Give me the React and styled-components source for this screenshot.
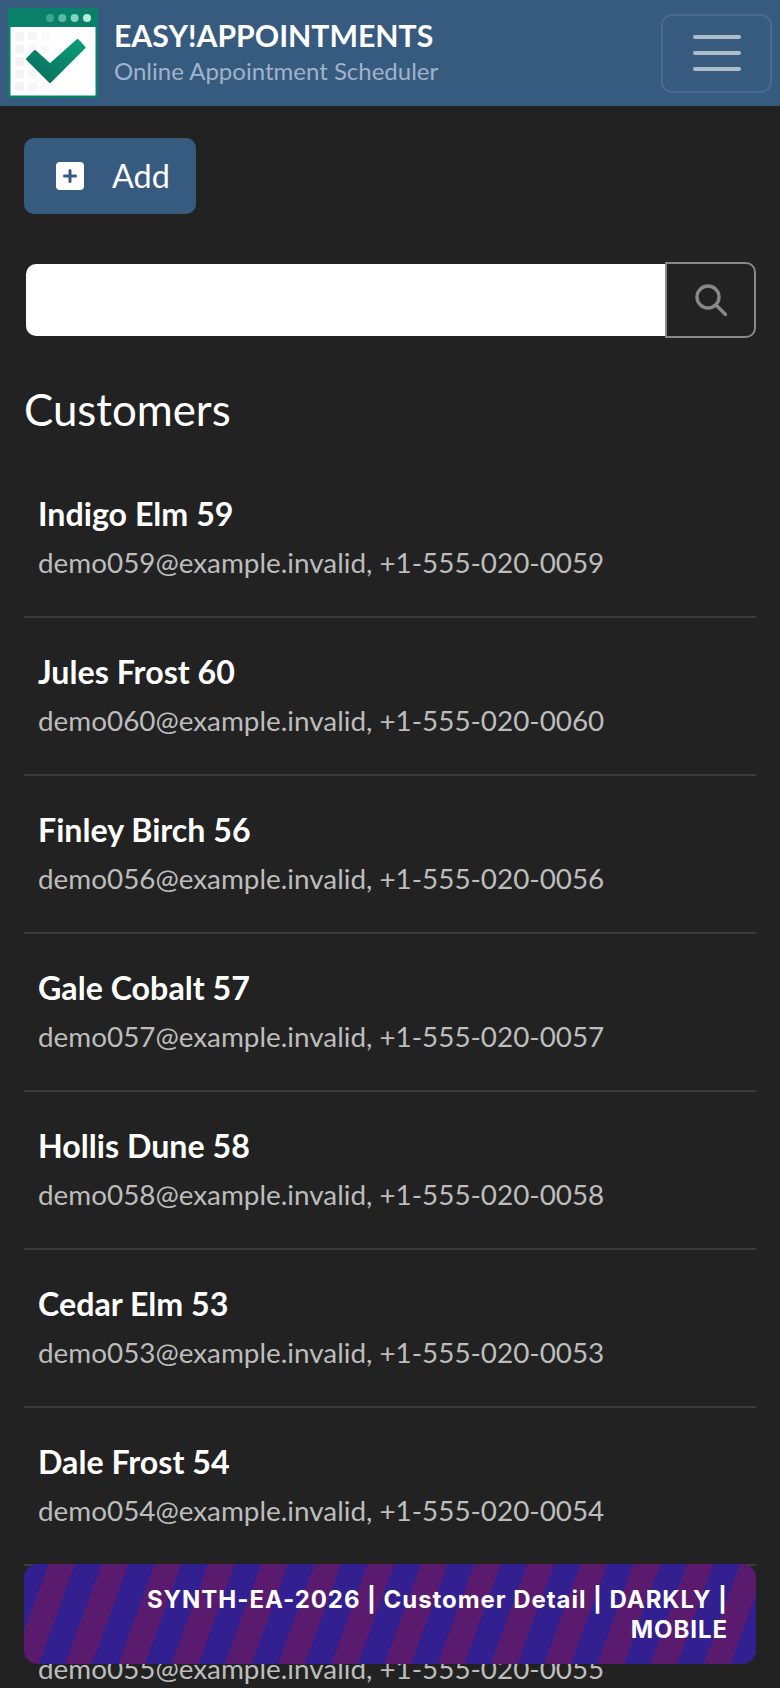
import React from "react";
import styled, { createGlobalStyle } from "styled-components";

const customers = [
  { name: "Indigo Elm 59", email: "demo059@example.invalid", phone: "+1-555-020-0059" },
  { name: "Jules Frost 60", email: "demo060@example.invalid", phone: "+1-555-020-0060" },
  { name: "Finley Birch 56", email: "demo056@example.invalid", phone: "+1-555-020-0056" },
  { name: "Gale Cobalt 57", email: "demo057@example.invalid", phone: "+1-555-020-0057" },
  { name: "Hollis Dune 58", email: "demo058@example.invalid", phone: "+1-555-020-0058" },
  { name: "Cedar Elm 53", email: "demo053@example.invalid", phone: "+1-555-020-0053" },
  { name: "Dale Frost 54", email: "demo054@example.invalid", phone: "+1-555-020-0054" },
  { name: "Ellis Birch 55", email: "demo055@example.invalid", phone: "+1-555-020-0055" },
];

const Logo = () => (
  <LogoSvg viewBox="0 0 90 90">
    <defs>
      <linearGradient id="logoGreen" x1="0" y1="1" x2="1" y2="0">
        <stop offset="0" stopColor="#0b6b5c" />
        <stop offset="1" stopColor="#0a9e76" />
      </linearGradient>
    </defs>
    <rect x="0" y="0" width="90" height="90" rx="2" fill="#08806a" />
    <rect x="2.5" y="19" width="85" height="68.5" fill="#ffffff" />
    {[0, 1, 2, 3, 4].map((r) =>
      [0, 1, 2, 3].map((c) => (
        <rect key={`${r}-${c}`} x={7 + c * 13} y={24 + r * 12.5} width="9" height="9" rx="2" fill="#f3f3f5" opacity={1 - c * 0.3} />
      ))
    )}
    <circle cx="42" cy="10" r="4" fill="#3fa78f" />
    <circle cx="54.3" cy="10" r="4" fill="#5dbba3" />
    <circle cx="66.6" cy="10" r="4" fill="#86d4bd" />
    <circle cx="79" cy="10" r="4" fill="#b5efd9" />
    <path
      d="M19.5 51 L27 43.5 L42 57 L69.5 32.5 L76 39.5 L42 73.5 Z"
      fill="url(#logoGreen)"
      stroke="url(#logoGreen)"
      strokeWidth="3"
      strokeLinejoin="round"
    />
  </LogoSvg>
);

export default function App() {
  return (
    <Page>
      <GlobalStyle />
      <Header>
        <Brand>
          <Logo />
          <BrandText>
            <BrandTitle>EASY!APPOINTMENTS</BrandTitle>
            <BrandSub>Online Appointment Scheduler</BrandSub>
          </BrandText>
        </Brand>
        <Toggler aria-label="Menu">
          <TogglerBar />
          <TogglerBar />
          <TogglerBar />
        </Toggler>
      </Header>

      <Main>
        <AddButton>
          <AddIcon viewBox="0 0 28 28">
            <rect width="28" height="28" rx="4" fill="#fff" />
            <path d="M14 8.5v11M8.5 14h11" stroke="#375a7f" strokeWidth="3" strokeLinecap="round" />
          </AddIcon>
          <AddLabel>Add</AddLabel>
        </AddButton>

        <SearchGroup>
          <SearchInput />
          <SearchButton aria-label="Search">
            <svg width="32" height="32" viewBox="0 0 32 32" fill="none" stroke="#888" strokeWidth="3.4" strokeLinecap="round">
              <circle cx="13" cy="13" r="11" />
              <path d="M21.5 21.5l9 9" />
            </svg>
          </SearchButton>
        </SearchGroup>

        <Heading>Customers</Heading>

        <List>
          {customers.map((c) => (
            <Row key={c.email}>
              <Name>{c.name}</Name>
              <Details>{c.email}, {c.phone}</Details>
            </Row>
          ))}
        </List>
      </Main>

      <Banner>SYNTH-EA-2026 | Customer Detail | DARKLY | MOBILE</Banner>
    </Page>
  );
}

const GlobalStyle = createGlobalStyle`
  html, body {
    margin: 0;
    padding: 0;
    background: #222222;
  }
  * {
    box-sizing: border-box;
  }
`;

const Page = styled.div`
  position: relative;
  width: 780px;
  height: 1688px;
  overflow: hidden;
  background: #222222;
  color: #ffffff;
  font-family: Lato, "Liberation Sans", sans-serif;
`;

const Header = styled.header`
  display: flex;
  align-items: center;
  justify-content: space-between;
  height: 106px;
  padding: 0 8px;
  background: #375a7f;
`;

const Brand = styled.div`
  display: flex;
  align-items: center;
  gap: 16px;
`;

const LogoSvg = styled.svg`
  display: block;
  width: 90px;
  height: 90px;
`;

const BrandText = styled.div`
  display: flex;
  flex-direction: column;
`;

const BrandTitle = styled.div`
  margin-top: -1px;
  font-size: 30.2px;
  font-weight: 700;
  line-height: 36px;
  color: #ffffff;
`;

const BrandSub = styled.div`
  margin-top: 1px;
  font-size: 24px;
  line-height: 34px;
  color: #9fb3cb;
`;

const Toggler = styled.button`
  display: flex;
  flex-direction: column;
  align-items: center;
  justify-content: center;
  gap: 12px;
  width: 111px;
  height: 79px;
  padding: 0;
  background: transparent;
  border: 2px solid rgba(255, 255, 255, 0.1);
  border-radius: 11px;
`;

const TogglerBar = styled.span`
  display: block;
  width: 48px;
  height: 4px;
  border-radius: 2px;
  background: #afbccc;
`;

const Main = styled.main`
  padding: 32px 24px 0;
`;

const AddButton = styled.button`
  display: flex;
  align-items: center;
  gap: 28px;
  width: 172px;
  height: 76px;
  padding: 0 0 0 32px;
  background: #375a7f;
  border: none;
  border-radius: 10px;
  color: #ffffff;
  font-family: inherit;
  font-size: 32.4px;
`;

const AddLabel = styled.span`
  margin-bottom: 2px;
`;

const AddIcon = styled.svg`
  display: block;
  width: 28px;
  height: 28px;
`;

const SearchGroup = styled.div`
  display: flex;
  align-items: center;
  margin-top: 48px;
`;

const SearchInput = styled.input`
  flex: 1;
  height: 72px;
  margin-left: 2px;
  background: #ffffff;
  border: none;
  border-radius: 10px 0 0 10px;
  outline: none;
`;

const SearchButton = styled.button`
  display: flex;
  align-items: center;
  justify-content: center;
  width: 91px;
  height: 76px;
  padding: 0;
  background: transparent;
  border: 2px solid #888888;
  border-radius: 0 10px 10px 0;
`;

const Heading = styled.h2`
  margin: 46px 0 0;
  font-size: 43.8px;
  font-weight: 400;
  line-height: 50px;
`;

const List = styled.div`
  margin-top: 26px;
`;

const Row = styled.div`
  height: 158px;
  padding: 29px 14px 0;
  border-bottom: 2px solid #3b3b3b;
`;

const Name = styled.div`
  font-size: 32.2px;
  font-weight: 700;
  line-height: 50px;
  color: #ffffff;
`;

const Details = styled.div`
  font-size: 27.85px;
  line-height: 48px;
  color: #bdbdbd;
`;

const Banner = styled.div`
  position: absolute;
  left: 24px;
  top: 1564px;
  width: 732px;
  height: 100px;
  padding: 21px 28px 0;
  border-radius: 14px;
  background: repeating-linear-gradient(110deg, #332090 -2px, #332090 23px, #5a1a6e 23px, #5a1a6e 48px);
  color: #ffffff;
  font-family: Inter, "Liberation Sans", sans-serif;
  font-size: 24px;
  font-weight: 700;
  line-height: 30px;
  letter-spacing: 0.95px;
  text-align: right;
`;
